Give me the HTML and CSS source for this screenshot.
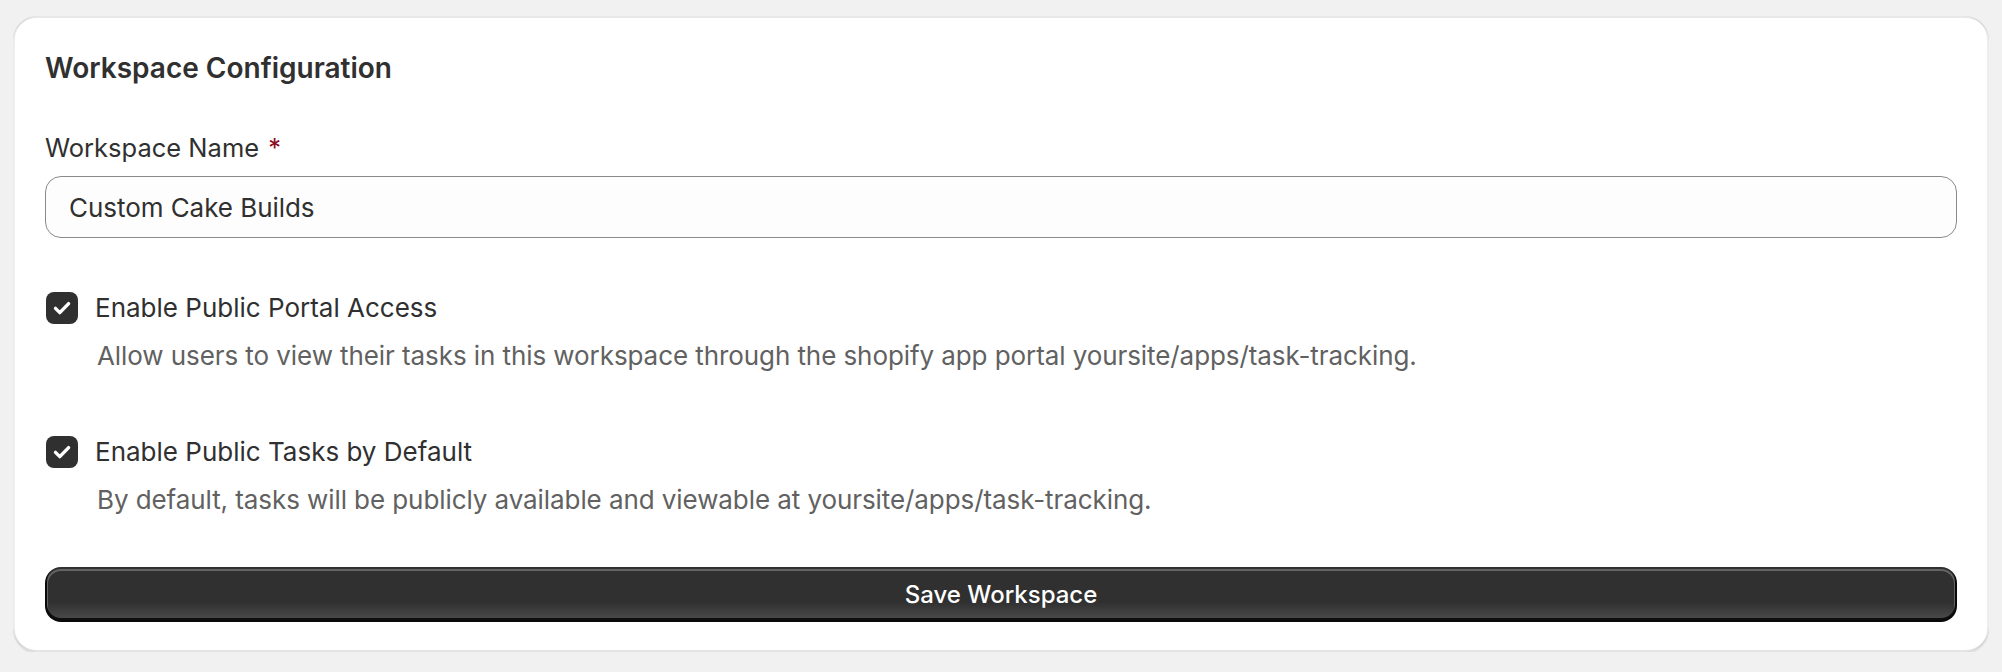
FILE: index.html
```html
<!DOCTYPE html>
<html lang="en">
<head>
<meta charset="utf-8">
<title>Workspace Configuration</title>
<link rel="stylesheet" href="styles.css">
</head>
<body>
  <div class="card">
    <h2 class="card-title">Workspace Configuration</h2>

    <div class="field">
      <label class="field-label" for="ws-name">Workspace Name <span class="req">*</span></label>
      <div class="input-wrap">
        <input id="ws-name" class="input" type="text" value="Custom Cake Builds">
      </div>
    </div>

    <div class="choice first">
      <label class="choice-row">
        <span class="checkbox">
          <svg viewBox="0 0 32 32" width="32" height="32" aria-hidden="true"><path d="M9.5 16.4 L13.8 20.6 L22.6 11.6" fill="none" stroke="#fff" stroke-width="3.4" stroke-linecap="round" stroke-linejoin="round"/></svg>
        </span>
        <span class="choice-label">Enable Public Portal Access</span>
      </label>
      <p class="choice-help">Allow users to view their tasks in this workspace through the shopify app portal yoursite/apps/task-tracking.</p>
    </div>

    <div class="choice">
      <label class="choice-row">
        <span class="checkbox">
          <svg viewBox="0 0 32 32" width="32" height="32" aria-hidden="true"><path d="M9.5 16.4 L13.8 20.6 L22.6 11.6" fill="none" stroke="#fff" stroke-width="3.4" stroke-linecap="round" stroke-linejoin="round"/></svg>
        </span>
        <span class="choice-label">Enable Public Tasks by Default</span>
      </label>
      <p class="choice-help">By default, tasks will be publicly available and viewable at yoursite/apps/task-tracking.</p>
    </div>

    <button class="btn-primary" type="button">Save Workspace</button>
  </div>
</body>
</html>
```

FILE: styles.css
```css
* { box-sizing: border-box; }

html, body {
  margin: 0;
  background: #f1f1f1;
}

body {
  padding: 16px 13px 0;
  font-family: Inter, "Noto Sans", "Liberation Sans", sans-serif;
  color: #303030;
}

.card {
  background: #ffffff;
  border-radius: 24px;
  padding: 32px 32px 30px;
  box-shadow:
    0 2px 0 0 rgba(26, 26, 26, 0.07),
    inset 2px 0 0 0 rgba(0, 0, 0, 0.07),
    inset -2px 0 0 0 rgba(0, 0, 0, 0.07),
    inset 0 -2px 0 0 rgba(0, 0, 0, 0.10),
    inset 0 2px 0 0 rgba(204, 204, 204, 0.45);
}

.card-title {
  margin: 0;
  font-size: 28px;
  line-height: 40px;
  font-weight: 600;
  color: #303030;
}

.field {
  margin-top: 40px;
}

.field-label {
  display: block;
  font-size: 25.5px;
  line-height: 40px;
  margin-bottom: 8px;
  color: #303030;
}

.req {
  color: #8e0b21;
  margin-left: 2px;
}

.input {
  display: block;
  width: 100%;
  height: 62px;
  margin: 0;
  padding: 0 23px;
  border: 1px solid #8a8a8a;
  border-radius: 16px;
  background: #fdfdfd;
  font-family: inherit;
  font-size: 26px;
  letter-spacing: -0.05px;
  color: #303030;
  outline: none;
}

.choice.first {
  margin-top: 50px;
}

.choice + .choice {
  margin-top: 56px;
}

.choice-row {
  display: flex;
  align-items: center;
  gap: 17px;
  height: 40px;
}

.checkbox {
  flex: none;
  width: 32px;
  height: 32px;
  margin-left: 1px;
  border-radius: 8px;
  background: #303030;
  display: flex;
}

.checkbox svg { display: block; }

.choice-label {
  font-size: 26px;
  line-height: 40px;
  color: #303030;
}

.choice-help {
  margin: 8px 0 0;
  padding-left: 52px;
  font-size: 26px;
  line-height: 40px;
  letter-spacing: -0.08px;
  color: #616161;
}

.btn-primary {
  display: block;
  width: 100%;
  height: 55px;
  margin-top: 47px;
  border: 0;
  border-radius: 16px;
  font-family: inherit;
  font-size: 24px;
  font-weight: 500;
  color: #ffffff;
  background:
    linear-gradient(180deg, rgba(48, 48, 48, 0) 63.53%, rgba(255, 255, 255, 0.15) 100%),
    #303030;
  box-shadow:
    inset 0 -2px 0 2px rgba(0, 0, 0, 0.8),
    inset 0 0 0 2px #303030,
    inset 0 1px 0 3px rgba(255, 255, 255, 0.25);
}
```
